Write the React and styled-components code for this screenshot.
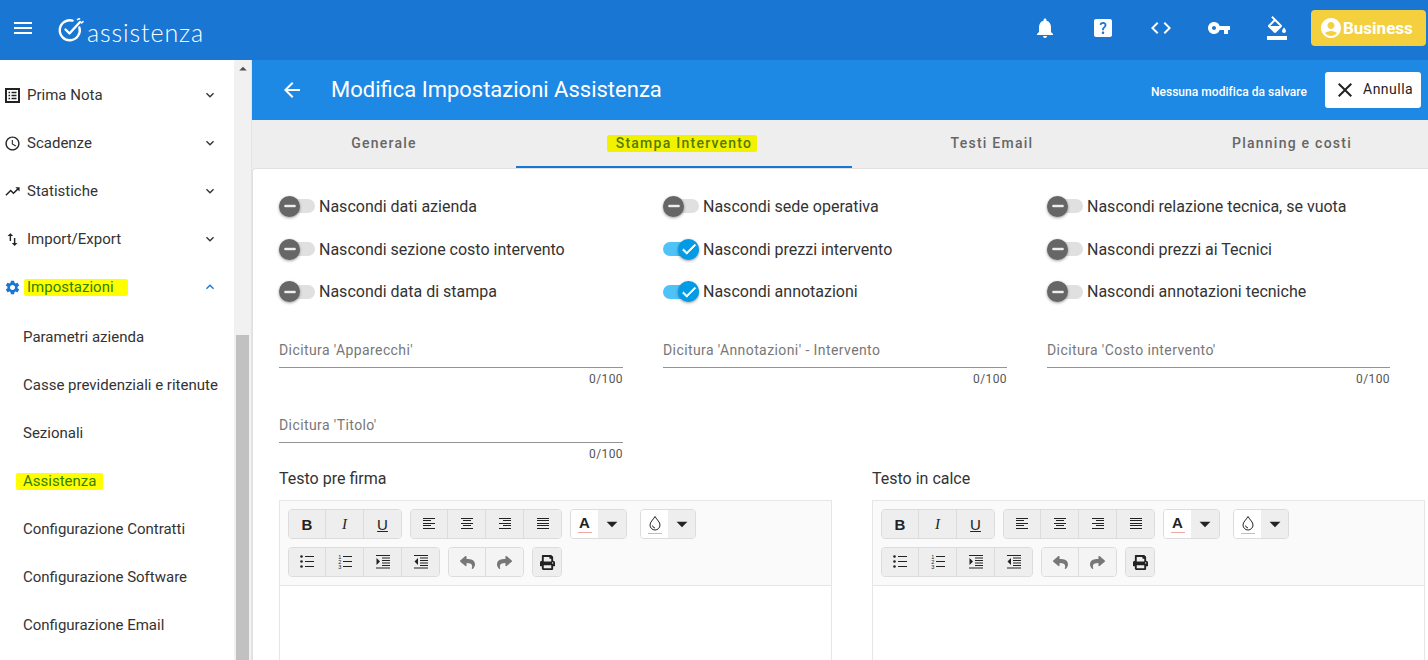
import React from 'react';
import styled, { createGlobalStyle } from 'styled-components';
import {
  MdMenu, MdNotifications, MdHelpCenter, MdCode, MdVpnKey, MdFormatColorFill, MdAccountCircle,
  MdArrowBack, MdClose, MdExpandMore, MdExpandLess, MdAccessTime, MdTrendingUp,
  MdSwapVert, MdSettings, MdCheck, MdRemove, MdArrowDropDown, MdArrowDropUp,
} from 'react-icons/md';
import { FaReply, FaShare, FaPrint } from 'react-icons/fa';

const Global = createGlobalStyle`
  html, body { margin: 0; padding: 0; height: 660px; overflow: hidden; background: #fff; }
  body { font-family: Roboto, "Liberation Sans", sans-serif; color: #333; }
  * { box-sizing: border-box; }
`;

const Page = styled.div`
  width: 1428px;
  height: 660px;
  display: flex;
  flex-direction: column;
  overflow: hidden;
`;

const TopBar = styled.header`
  height: 60px;
  flex: none;
  background: #1976d2;
  display: flex;
  align-items: center;
  color: #fff;
  padding-right: 2px;
`;
const MenuButton = styled.div`
  width: 46px;
  padding-left: 11px;
  display: flex;
  font-size: 24px;
  margin-top: -5px;
`;
const Logo = styled.div`
  display: flex;
  align-items: center;
  margin-left: 12px;
`;
const LogoText = styled.span`
  font-family: Lato, sans-serif;
  font-weight: 300;
  font-size: 25px;
  letter-spacing: 0.9px;
  margin-left: 3px;
  margin-top: 4px;
`;
const TopActions = styled.div`
  margin-left: auto;
  margin-bottom: 4px;
  display: flex;
  align-items: center;
`;
const TopIcon = styled.div`
  width: 58px;
  display: flex;
  justify-content: center;
  font-size: 24px;
`;
const BusinessButton = styled.div`
  width: 115px;
  height: 36px;
  margin-left: 5px;
  background: #f4d03f;
  border-radius: 4px;
  display: flex;
  align-items: center;
  padding-left: 8px;
  gap: 0;
  font-size: 17px;
  font-weight: 700;
  padding-bottom: 1px;
  svg { font-size: 24px; }
`;

const Body = styled.div`
  flex: 1;
  display: flex;
  min-height: 0;
`;
const Sidebar = styled.nav`
  width: 234px;
  flex: none;
  padding-top: 11px;
  overflow: hidden;
`;
const NavItem = styled.div`
  height: 48px;
  display: flex;
  align-items: center;
  padding-left: 4px;
  font-size: 15px;
  color: #333;
`;
const NavIcon = styled.span`
  width: 23px;
  display: flex;
  font-size: 17px;
  color: ${p => p.$color || '#222'};
`;
const NavChevron = styled.span`
  margin-left: auto;
  margin-right: 16px;
  display: flex;
  font-size: 16px;
  color: ${p => p.$color || '#333'};
`;
const SubList = styled.div`
  padding-top: 2px;
`;
const SubItem = styled.div`
  height: 48px;
  display: flex;
  align-items: center;
  padding-left: 23px;
  font-size: 15px;
  white-space: nowrap;
  color: #333;
`;
const Marker = styled.span`
  background: ${p => p.$bg || '#ffff00'};
  color: ${p => p.$color || 'inherit'};
  padding: 0 ${p => p.$padRight ?? p.$pad ?? 3}px 0 ${p => p.$pad ?? 3}px;
  margin: 0 -${p => p.$padRight ?? p.$pad ?? 3}px 0 -${p => p.$pad ?? 3}px;
  line-height: 17px;
  border-radius: 2px;
`;
const Scrollbar = styled.div`
  width: 18px;
  flex: none;
  background: #f1f1f1;
  border-right: 1px solid #e4e4e4;
  display: flex;
  flex-direction: column;
  align-items: center;
`;
const ScrollArrow = styled.div`
  height: 18px;
  display: flex;
  align-items: center;
  font-size: 18px;
  color: #505050;
`;
const ScrollThumb = styled.div`
  width: 13px;
  margin-top: 257px;
  flex: 1;
  background: #c1c1c1;
`;

const Main = styled.main`
  flex: 1;
  min-width: 0;
  display: flex;
  flex-direction: column;
  background: #eee;
`;
const HeaderBar = styled.div`
  height: 60px;
  flex: none;
  background: #1e88e5;
  color: #fff;
  display: flex;
  align-items: center;
  padding-left: 28px;
  padding-right: 7px;
`;
const BackIcon = styled.span`
  display: flex;
  font-size: 24px;
  margin-right: 27px;
`;
const Title = styled.h1`
  margin: 0 0 2px;
  font-size: 22px;
  font-weight: 400;
`;
const SaveNote = styled.span`
  margin-left: auto;
  font-size: 12px;
  font-weight: 500;
  letter-spacing: 0.04px;
  margin-top: 3px;
`;
const CancelButton = styled.div`
  width: 96px;
  height: 36px;
  margin-left: 18px;
  background: #fff;
  color: #222;
  border-radius: 3px;
  display: flex;
  align-items: center;
  padding-left: 8px;
  padding-bottom: 2px;
  gap: 6px;
  font-size: 14px;
  letter-spacing: 0.5px;
  svg { font-size: 24px; margin-top: 2px; }
`;
const Tabs = styled.div`
  height: 48px;
  flex: none;
  display: flex;
  overflow: hidden;
`;
const Tab = styled.div`
  flex: none;
  width: ${p => p.$width}px;
  display: flex;
  align-items: center;
  justify-content: center;
  font-size: 14px;
  font-weight: 500;
  letter-spacing: 1.25px;
  color: #666;
  border-bottom: 2px solid ${p => (p.$active ? '#1976d2' : 'transparent')};
`;
const Card = styled.div`
  flex: 1;
  min-height: 0;
  overflow: hidden;
  background: #fff;
  border-left: 1px solid #e0e0e0;
  border-top: 1px solid #e0e0e0;
  border-top-left-radius: 4px;
  padding: 26px 0 0 26px;
`;
const SwitchGrid = styled.div`
  display: grid;
  grid-template-columns: repeat(3, 344px);
  grid-template-rows: 22px 23px 21px;
  column-gap: 40px;
  row-gap: 20.5px;
`;
const SwitchRow = styled.div`
  display: flex;
  align-items: center;
  gap: 4px;
  font-size: 16px;
  color: #333;
  white-space: nowrap;
`;
const Track = styled.span`
  width: 36px;
  height: 14px;
  border-radius: 7px;
  display: flex;
  align-items: center;
  justify-content: ${p => (p.$on ? 'flex-end' : 'flex-start')};
  background: ${p => (p.$on ? '#4fc3f7' : '#e0e0e0')};
`;
const Thumb = styled.span`
  width: 21px;
  height: 21px;
  flex: none;
  border-radius: 50%;
  display: flex;
  align-items: center;
  justify-content: center;
  color: #fff;
  font-size: 18px;
  background: ${p => (p.$on ? '#039be5' : '#666')};
  box-shadow: 0 1px 3px rgba(0, 0, 0, 0.4);
  svg path:not([fill='none']) { stroke: #fff; stroke-width: 1; }
`;
const FieldGrid = styled.div`
  display: grid;
  grid-template-columns: 344px 344px 343px;
  column-gap: 40px;
  row-gap: 29px;
  margin-top: 38px;
`;
const Field = styled.div`
  display: flex;
  flex-direction: column;
`;
const FieldLabel = styled.div`
  height: 28px;
  padding-bottom: 8px;
  line-height: 20px;
  font-size: 14px;
  letter-spacing: 0.41px;
  color: #777;
  border-bottom: 1px solid #949494;
`;
const Counter = styled.div`
  height: 18px;
  padding-top: 4px;
  line-height: 14px;
  text-align: right;
  font-size: 12px;
  letter-spacing: 0.4px;
  color: #555;
`;
const Editors = styled.div`
  display: grid;
  grid-template-columns: repeat(2, 553px);
  column-gap: 40px;
  margin-top: 8px;
`;
const EditorLabel = styled.div`
  line-height: 20px;
  font-size: 16px;
  color: #333;
  margin-bottom: 11px;
`;
const EditorBox = styled.div`
  border: 1px solid #e6e6e6;
  height: 300px;
`;
const Toolbar = styled.div`
  background: #fafafa;
  border-bottom: 1px solid #e6e6e6;
  padding: 8px;
  display: flex;
  flex-direction: column;
  gap: 8px;
`;
const ToolRow = styled.div`
  display: flex;
  gap: 8px;
`;
const ToolGroup = styled.div`
  display: flex;
  height: 30px;
  border: 1px solid #dcdcdc;
  border-radius: 4px;
  overflow: hidden;
`;
const ToolButton = styled.div`
  width: ${p => p.$width || (p.$first ? 36 : 38)}px;
  border-left: ${p => (p.$first ? 'none' : '1px solid #dcdcdc')};
  background: ${p => (p.$muted ? '#f4f4f4' : '#eeeeee')};
  color: ${p => (p.$muted ? '#777' : '#222')};
  display: flex;
  align-items: center;
  justify-content: center;
  font-size: 15px;
  font-weight: ${p => (p.$weight || 400)};
  font-family: ${p => (p.$serif ? '"Liberation Serif", serif' : '"Liberation Sans", sans-serif')};
  font-style: ${p => (p.$serif ? 'italic' : 'normal')};
  text-decoration: ${p => (p.$under ? 'underline' : 'none')};
`;
const ColorPicker = styled.div`
  display: flex;
  height: 30px;
  width: ${p => p.$width}px;
  border: 1px solid #dcdcdc;
  border-radius: 4px;
  overflow: hidden;
  margin-left: ${p => p.$gap || 0}px;
`;
const ColorSwatch = styled.div`
  width: 27px;
  background: #fff;
  display: flex;
  flex-direction: column;
  align-items: center;
  justify-content: center;
  font-family: "Liberation Sans", sans-serif;
  font-weight: 700;
  font-size: 15px;
  line-height: 15px;
  color: #222;
`;
const ColorLine = styled.span`
  width: 14px;
  height: 1px;
  margin-top: 2px;
  background: #f1a9a0;
`;
const ColorArrow = styled.div`
  flex: 1;
  background: #eee;
  display: flex;
  align-items: center;
  justify-content: center;
  font-size: 26px;
  color: #222;
`;

// righe orizzontali per allineamento, elenchi e rientri del toolbar
const Lines = ({ rows }) => (
  <svg width="16" height="16" viewBox="0 0 16 16" fill="none" stroke="currentColor" strokeWidth="1">
    {rows.map(([x1, x2, y], i) => <line key={i} x1={x1} x2={x2} y1={y + 0.5} y2={y + 0.5} />)}
  </svg>
);
const alignRows = {
  left: [[2, 14, 2], [2, 10, 4], [2, 14, 7], [2, 10, 9], [2, 14, 12]],
  center: [[2, 14, 2], [4, 12, 4], [2, 14, 7], [4, 12, 9], [2, 14, 12]],
  right: [[2, 14, 2], [6, 14, 4], [2, 14, 7], [6, 14, 9], [2, 14, 12]],
  justify: [[2, 14, 2], [2, 14, 4], [2, 14, 7], [2, 14, 9], [2, 14, 12]],
};
const ListIcon = ({ numbered }) => (
  <svg width="16" height="16" viewBox="0 0 16 16" fill="currentColor">
    {[2.5, 7.5, 12.5].map((y, i) => (
      <React.Fragment key={y}>
        {numbered
          ? <text x="1.2" y={y + 2} fontSize="5.5" fontFamily="Liberation Sans">{i + 1}</text>
          : <circle cx="2.5" cy={y} r="1.3" />}
        <rect x="6" y={y - 0.5} width="9" height="1" />
      </React.Fragment>
    ))}
  </svg>
);
const IndentIcon = ({ out }) => (
  <svg width="16" height="16" viewBox="0 0 16 16" fill="currentColor">
    {[1, 3.5, 6, 8.5, 11, 13.5].map((y, i) => (
      <rect key={y} x={i === 0 || i === 5 ? 1 : 7} y={y} width={i === 0 || i === 5 ? 14 : 8} height="1" />
    ))}
    <polygon points={out ? '5,4 5,11 1.5,7.5' : '1.5,4 1.5,11 5,7.5'} />
  </svg>
);
const DropIcon = () => (
  <svg width="14" height="16" viewBox="0 0 14 16" fill="none" stroke="#222" strokeWidth="1">
    <path d="M7 1.5 C9 5 12 7 12 10 A5 5 0 0 1 2 10 C2 7 5 5 7 1.5Z" />
    <path d="M4.5 10.5 A3 3 0 0 0 7 13" />
  </svg>
);
const LogoMark = () => (
  <svg width="26" height="24" viewBox="0 0 26 24" fill="none" stroke="#fff" strokeWidth="2.4" strokeLinecap="round" strokeLinejoin="round">
    <path d="M14.5 2.6 A10 10 0 1 0 21.4 9.5" />
    <path d="M7.5 11.5 L11.5 15.5 L22 4" />
    <path d="M19.5 1.5 L21.5 0.8 M23.5 5 L25 3.6" strokeWidth="1.6" />
  </svg>
);
const LedgerIcon = () => (
  <svg width="17" height="17" viewBox="0 0 17 17" fill="none" stroke="#222">
    <rect x="2" y="2" width="13" height="13" strokeWidth="2" />
    <path d="M4.5 5.5h1.6M4.5 8.5h1.6M4.5 11.5h1.6M7.5 5.5h5M7.5 8.5h5M7.5 11.5h5" strokeWidth="1.4" />
  </svg>
);

const ColorTool = ({ gap, width, children }) => (
  <ColorPicker $gap={gap} $width={width}>
    <ColorSwatch>{children}<ColorLine /></ColorSwatch>
    <ColorArrow><MdArrowDropDown /></ColorArrow>
  </ColorPicker>
);

const Editor = ({ label }) => (
  <div>
    <EditorLabel>{label}</EditorLabel>
    <EditorBox>
      <Toolbar>
        <ToolRow>
          <ToolGroup>
            <ToolButton $first $weight={700}>B</ToolButton>
            <ToolButton $serif>I</ToolButton>
            <ToolButton $under>U</ToolButton>
          </ToolGroup>
          <ToolGroup>
            <ToolButton $first><Lines rows={alignRows.left} /></ToolButton>
            <ToolButton><Lines rows={alignRows.center} /></ToolButton>
            <ToolButton><Lines rows={alignRows.right} /></ToolButton>
            <ToolButton><Lines rows={alignRows.justify} /></ToolButton>
          </ToolGroup>
          <ColorTool width={57}>A</ColorTool>
          <ColorTool gap={5} width={56}><DropIcon /></ColorTool>
        </ToolRow>
        <ToolRow>
          <ToolGroup>
            <ToolButton $first><ListIcon /></ToolButton>
            <ToolButton><ListIcon numbered /></ToolButton>
            <ToolButton><IndentIcon /></ToolButton>
            <ToolButton><IndentIcon out /></ToolButton>
          </ToolGroup>
          <ToolGroup>
            <ToolButton $first $muted><FaReply /></ToolButton>
            <ToolButton $muted><FaShare /></ToolButton>
          </ToolGroup>
          <ToolGroup>
            <ToolButton $first $width={28}><FaPrint /></ToolButton>
          </ToolGroup>
        </ToolRow>
      </Toolbar>
    </EditorBox>
  </div>
);

const switches = [
  ['Nascondi dati azienda', false],
  ['Nascondi sede operativa', false],
  ['Nascondi relazione tecnica, se vuota', false],
  ['Nascondi sezione costo intervento', false],
  ['Nascondi prezzi intervento', true],
  ['Nascondi prezzi ai Tecnici', false],
  ['Nascondi data di stampa', false],
  ['Nascondi annotazioni', true],
  ['Nascondi annotazioni tecniche', false],
];
const fields = ["Dicitura 'Apparecchi'", "Dicitura 'Annotazioni' - Intervento", "Dicitura 'Costo intervento'", "Dicitura 'Titolo'"];
const navItems = [
  ['Prima Nota', <LedgerIcon />],
  ['Scadenze', <MdAccessTime />],
  ['Statistiche', <MdTrendingUp />],
  ['Import/Export', <MdSwapVert />],
];
const subItems = ['Parametri azienda', 'Casse previdenziali e ritenute', 'Sezionali', 'Assistenza', 'Configurazione Contratti', 'Configurazione Software', 'Configurazione Email'];

export default function App() {
  return (
    <Page>
      <Global />
      <TopBar>
        <MenuButton><MdMenu /></MenuButton>
        <Logo><LogoMark /><LogoText>assistenza</LogoText></Logo>
        <TopActions>
          <TopIcon><MdNotifications /></TopIcon>
          <TopIcon><MdHelpCenter /></TopIcon>
          <TopIcon><MdCode /></TopIcon>
          <TopIcon><MdVpnKey /></TopIcon>
          <TopIcon><MdFormatColorFill /></TopIcon>
          <BusinessButton><MdAccountCircle />Business</BusinessButton>
        </TopActions>
      </TopBar>
      <Body>
        <Sidebar>
          {navItems.map(([name, icon]) => (
            <NavItem key={name}>
              <NavIcon>{icon}</NavIcon>{name}
              <NavChevron><MdExpandMore /></NavChevron>
            </NavItem>
          ))}
          <NavItem>
            <NavIcon $color="#1976d2"><MdSettings /></NavIcon>
            <Marker $color="#338000" $padRight={14}>Impostazioni</Marker>
            <NavChevron $color="#1976d2"><MdExpandLess /></NavChevron>
          </NavItem>
          <SubList>
            {subItems.map(name => (
              <SubItem key={name}>
                {name === 'Assistenza' ? <Marker $color="#338000" $pad={7}>{name}</Marker> : name}
              </SubItem>
            ))}
          </SubList>
        </Sidebar>
        <Scrollbar>
          <ScrollArrow><MdArrowDropUp /></ScrollArrow>
          <ScrollThumb />
        </Scrollbar>
        <Main>
          <HeaderBar>
            <BackIcon><MdArrowBack /></BackIcon>
            <Title>Modifica Impostazioni Assistenza</Title>
            <SaveNote>Nessuna modifica da salvare</SaveNote>
            <CancelButton><MdClose />Annulla</CancelButton>
          </HeaderBar>
          <Tabs>
            <Tab $width={264}>Generale</Tab>
            <Tab $width={336} $active><Marker $pad={9} $padRight={5} $bg="#f2f200" $color="#557a00">Stampa Intervento</Marker></Tab>
            <Tab $width={280}>Testi Email</Tab>
            <Tab $width={320}>Planning e costi</Tab>
          </Tabs>
          <Card>
            <SwitchGrid>
              {switches.map(([label, on]) => (
                <SwitchRow key={label}>
                  <Track $on={on}>
                    <Thumb $on={on}>{on ? <MdCheck /> : <MdRemove />}</Thumb>
                  </Track>
                  {label}
                </SwitchRow>
              ))}
            </SwitchGrid>
            <FieldGrid>
              {fields.map(label => (
                <Field key={label}>
                  <FieldLabel>{label}</FieldLabel>
                  <Counter>0/100</Counter>
                </Field>
              ))}
            </FieldGrid>
            <Editors>
              <Editor label="Testo pre firma" />
              <Editor label="Testo in calce" />
            </Editors>
          </Card>
        </Main>
      </Body>
    </Page>
  );
}
